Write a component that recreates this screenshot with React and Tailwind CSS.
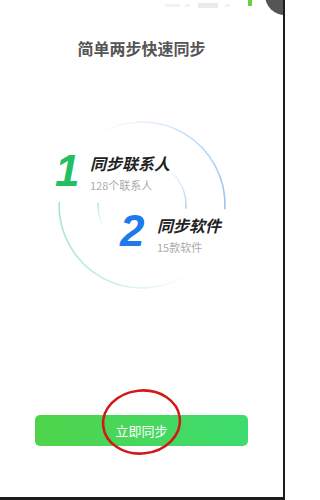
import React from 'react';

const cjk = { fontFamily: '"Noto Sans CJK SC", "Noto Sans", sans-serif' };
const digitFont = { fontFamily: '"Liberation Sans", Arial, sans-serif' };

// decorative rings behind the two steps (page coordinates, y offset 100)
const Rings = () => (
  <svg className="absolute inset-0" width="283" height="200" viewBox="0 100 283 200" fill="none">
    <defs>
      <linearGradient id="gA" gradientUnits="userSpaceOnUse" x1="95" y1="130" x2="225" y2="200">
        <stop offset="0" stopColor="#cfe6f7" stopOpacity="0" />
        <stop offset="0.35" stopColor="#c6e0f5" stopOpacity="0.6" />
        <stop offset="1" stopColor="#9cc6ee" stopOpacity="1" />
      </linearGradient>
      <linearGradient id="gB" gradientUnits="userSpaceOnUse" x1="60" y1="205" x2="192" y2="272">
        <stop offset="0" stopColor="#a8e6c6" stopOpacity="1" />
        <stop offset="0.6" stopColor="#b8ecd6" stopOpacity="0.8" />
        <stop offset="1" stopColor="#c8eef0" stopOpacity="0" />
      </linearGradient>
      <linearGradient id="gC" gradientUnits="userSpaceOnUse" x1="168" y1="170" x2="186" y2="210">
        <stop offset="0" stopColor="#cfe4f6" stopOpacity="0.2" />
        <stop offset="1" stopColor="#a9cdef" stopOpacity="1" />
      </linearGradient>
      <linearGradient id="gD" gradientUnits="userSpaceOnUse" x1="98" y1="202" x2="104" y2="228">
        <stop offset="0" stopColor="#a8e4c8" stopOpacity="1" />
        <stop offset="1" stopColor="#c8efdc" stopOpacity="0" />
      </linearGradient>
    </defs>
    <path d="M98 134.6 A83 83 0 0 1 224.9 209.3" stroke="url(#gA)" strokeWidth="1.6" />
    <path d="M59.1 202 A83 83 0 0 0 189.6 273" stroke="url(#gB)" strokeWidth="1.6" />
    <path d="M169.1 170.3 A44 44 0 0 1 185.8 208.8" stroke="url(#gC)" strokeWidth="1.5" />
    <path d="M98.1 202.7 A44 44 0 0 0 103.9 227" stroke="url(#gD)" strokeWidth="1.5" />
  </svg>
);

const Step = ({ num, color, title, sub, indent, digitWidth, textTop }) => (
  <div className="flex items-start" style={{ paddingLeft: indent }}>
    <span
      className="italic font-bold text-[44px] leading-none"
      style={{ ...digitFont, color, width: digitWidth }}
    >
      {num}
    </span>
    <div className="flex flex-col gap-[4px]" style={{ paddingTop: textTop }}>
      <span className="bg-white text-[16px] leading-[22px] font-bold italic text-[#222]" style={cjk}>
        {title}
      </span>
      <span className="bg-white text-[11px] leading-[14px] text-[#ababab]" style={cjk}>
        {sub}
      </span>
    </div>
  </div>
);

export default function App() {
  return (
    <div className="relative w-[285px] h-[500px] overflow-hidden bg-white flex flex-col border-r-2 border-b-[3px] border-[#1c1c1c]">
      {/* status bar */}
      <div className="relative h-[16px] shrink-0">
        <div className="absolute left-[165px] top-[4px] w-[15px] h-[3px] bg-[#f2f2f2]" />
        <div className="absolute left-[185px] top-[4px] w-[5px] h-[3px] bg-[#f2f2f2]" />
        <div className="absolute left-[198px] top-[3px] w-[20px] h-[5px] bg-[#ebebeb]" />
        <div className="absolute left-[225px] top-[4px] w-[5px] h-[3px] bg-[#f2f2f2]" />
        <div className="absolute left-[248px] top-0 w-[4px] h-[6px] bg-[#6ccf3e]" />
        <div className="absolute left-[265px] top-[-25px] w-[40px] h-[40px] rounded-full bg-[#555]" />
      </div>

      <h1 className="mt-[21px] text-center text-[16px] leading-[22px] font-bold text-[#555]" style={cjk}>
        简单两步快速同步
      </h1>

      <div className="relative mt-[41px] h-[200px] shrink-0">
        <Rings />
        <div className="relative flex flex-col pt-[49px] gap-[16px]">
          <Step num="1" color="#22c063" title="同步联系人" sub="128个联系人" indent={55} digitWidth={35} textTop={3} />
          <Step num="2" color="#1d79ec" title="同步软件" sub="15款软件" indent={120} digitWidth={37} textTop={5} />
        </div>
      </div>

      <button
        className="mt-auto mb-[51px] ml-[35px] w-[213px] h-[31px] rounded-[5px] bg-gradient-to-r from-[#4fd34a] to-[#3ddc6e] text-white text-[13px]"
        style={cjk}
      >
        立即同步
      </button>

      {/* red marker annotation */}
      <svg className="absolute left-[100px] top-[387px]" width="85" height="70" viewBox="0 0 85 70" fill="none">
        <ellipse cx="41.5" cy="35" rx="38.5" ry="31.5" stroke="#d21919" strokeWidth="2.6" transform="rotate(-6 41.5 35)" />
      </svg>
    </div>
  );
}
